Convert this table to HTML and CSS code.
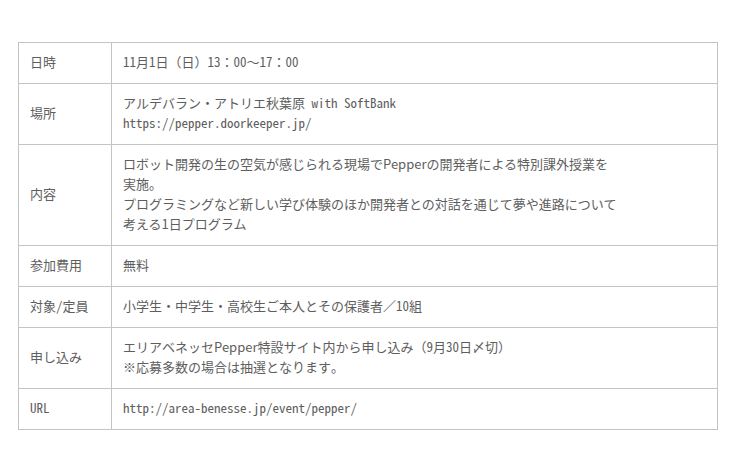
FILE: index.html
```html
<!DOCTYPE html>
<html lang="ja">
<head>
<meta charset="utf-8">
<link rel="stylesheet" href="styles.css">
</head>
<body>
<div class="wrap">
<table class="info">
<colgroup><col class="c1"><col></colgroup>
<tr><th>日時</th><td>11月1日（日）13：00～17：00</td></tr>
<tr><th>場所</th><td>アルデバラン・アトリエ秋葉原 with SoftBank<br>https://pepper.doorkeeper.jp/</td></tr>
<tr><th>内容</th><td class="prop">ロボット開発の生の空気が感じられる現場でPepperの開発者による特別課外授業を<br>実施。<br>プログラミングなど新しい学び体験のほか開発者との対話を通じて夢や進路について<br>考える1日プログラム</td></tr>
<tr><th>参加費用</th><td>無料</td></tr>
<tr><th>対象/定員</th><td>小学生・中学生・高校生ご本人とその保護者／10組</td></tr>
<tr><th>申し込み</th><td>エリアベネッセ<span class="p">Pepper</span>特設サイト内から申し込み（9月30日〆切）<br>※応募多数の場合は抽選となります。</td></tr>
<tr><th>URL</th><td>http://area-benesse.jp/event/pepper/</td></tr>
</table>
</div>
</body>
</html>
```
FILE: styles.css
```css
html, body { margin: 0; padding: 0; background: #fff; }
.wrap { padding: 42px 18px 0 18px; }
.info {
  width: 700px;
  border-collapse: collapse;
  font-family: "Noto Sans Mono CJK JP", "Noto Sans CJK JP", monospace;
  font-size: 13px;
  line-height: 20px;
  color: #5e5e5e;
}
.info col.c1 { width: 93px; }
.info th, .info td {
  border: 1px solid #c4c4c4;
  padding: 9px 11px 11px;
  text-align: left;
  font-weight: normal;
  vertical-align: middle;
}
.info td.prop, .info .p { font-family: "Noto Sans CJK JP", sans-serif; }
```
